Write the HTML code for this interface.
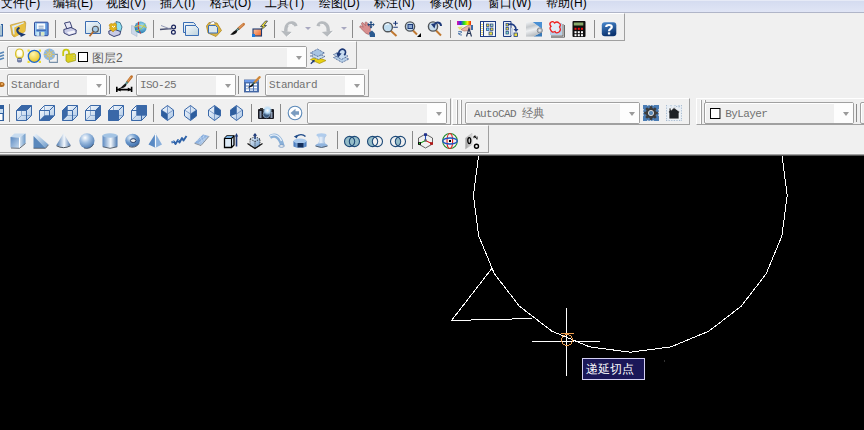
<!DOCTYPE html><html><head><meta charset="utf-8"><style>
*{box-sizing:border-box}
html,body{margin:0;padding:0}
body{width:864px;height:430px;overflow:hidden;background:#f0f0f0;position:relative;font-family:"Liberation Sans",sans-serif}
.a{position:absolute;overflow:visible}
.menu{position:absolute;left:0;top:0;width:864px;height:13px;background:linear-gradient(#e6eaf6 0px,#e6eaf6 1px,#d5dcf0 1.5px,#e0e5f5 12px);border-bottom:1px solid #b0b5c8}
.mi{position:absolute;top:-4px;font-size:12px;line-height:14px;color:#000;white-space:nowrap;font-weight:500}
.tb{position:absolute;border-top:1px solid #fff;border-left:1px solid #fff;border-right:1px solid #a0a0a0;border-bottom:1px solid #a0a0a0}
.sep{position:absolute;width:1px;background:#8a8a8a}
.cb{position:absolute;border:1px solid #a0a0a0;border-radius:2px;background:#f0f0f0;box-shadow:inset 1px 1px 0 #fff}
.cb .dd{position:absolute;right:0;top:0;bottom:0;background:#fdfdfd}
.cb .arr{position:absolute;right:4px;top:50%;margin-top:-1px;width:0;height:0;border-left:3.5px solid transparent;border-right:3.5px solid transparent;border-top:4px solid #9a9a9a}
.cb .t{position:absolute;top:0;bottom:0;display:flex;align-items:center;white-space:nowrap;color:#606060}
.sq{display:inline-block;width:11px;height:11px;border:1px solid #000;background:#fff;margin-right:5px}
.mono{color:#707070 !important;font-family:"Liberation Mono",monospace;font-size:11.6px;letter-spacing:-0.65px;transform:scaleX(0.95);transform-origin:0 50%}
.sans{font-family:"Liberation Sans",sans-serif;font-size:12px}
.grip{position:absolute;width:8px;border-left:1px solid #fff}
.grip:before,.grip:after{content:"";position:absolute;top:0;bottom:0;width:1px;background:#a0a0a0;box-shadow:-1px 0 0 #fff}
.grip:before{left:4px}.grip:after{left:8px}
</style></head><body><div class="menu">
<span class="mi" style="left:1px">文件(F)</span>
<span class="mi" style="left:53px">编辑(E)</span>
<span class="mi" style="left:106px">视图(V)</span>
<span class="mi" style="left:160px">插入(I)</span>
<span class="mi" style="left:210px">格式(O)</span>
<span class="mi" style="left:265px">工具(T)</span>
<span class="mi" style="left:319px">绘图(D)</span>
<span class="mi" style="left:374px">标注(N)</span>
<span class="mi" style="left:430px">修改(M)</span>
<span class="mi" style="left:488px">窗口(W)</span>
<span class="mi" style="left:546px">帮助(H)</span>
</div>
<div class="tb" style="left:-5px;top:13px;width:630px;height:28px"></div>
<div class="tb" style="left:-5px;top:41px;width:362px;height:28px"></div>
<div class="tb" style="left:-5px;top:69px;width:374px;height:28px"></div>
<div class="tb" style="left:-5px;top:98px;width:456px;height:27px"></div>
<div class="tb" style="left:452px;top:98px;width:238px;height:27px"></div>
<div class="tb" style="left:696px;top:98px;width:200px;height:27px"></div>
<div class="tb" style="left:-5px;top:125px;width:494px;height:28px"></div>
<div class="a" style="left:0;top:153px;width:864px;height:1px;background:#f4f4f4"></div>
<div class="a" style="left:0;top:154px;width:864px;height:1px;background:#a0a0a0"></div>
<div class="a" style="left:0;top:155px;width:864px;height:1px;background:#505050"></div>
<div class="sep" style="left:55px;top:20px;height:18px"></div>
<div class="sep" style="left:153px;top:20px;height:18px"></div>
<div class="sep" style="left:274px;top:20px;height:18px"></div>
<div class="sep" style="left:352px;top:20px;height:18px"></div>
<div class="sep" style="left:450px;top:20px;height:18px"></div>
<div class="sep" style="left:594px;top:20px;height:18px"></div>
<div class="a" style="left:305px;top:27px;width:0;height:0;border-left:3px solid transparent;border-right:3px solid transparent;border-top:3px solid #a8a8c0"></div>
<div class="a" style="left:341px;top:27px;width:0;height:0;border-left:3px solid transparent;border-right:3px solid transparent;border-top:3px solid #a8a8c0"></div>
<div class="cb" style="left:7px;top:46px;width:300px;height:22px"><div class="dd" style="width:19px"></div><div class="arr"></div><div class="t mono" style="left:4px;margin-top:-1px"></div></div>
<div class="a" style="left:78px;top:52px;width:10px;height:10px;border:1px solid #000;background:#fff"></div>
<span class="a" style="left:92px;top:47px;height:22px;display:flex;align-items:center;font-size:12px;color:#606060">图层2</span>
<div class="cb" style="left:7px;top:74px;width:100px;height:22px"><div class="dd" style="width:19px"></div><div class="arr"></div><div class="t mono" style="left:3px;margin-top:-1px">Standard</div></div>
<div class="sep" style="left:109px;top:76px;height:18px"></div>
<div class="cb" style="left:136px;top:74px;width:100px;height:22px"><div class="dd" style="width:19px"></div><div class="arr"></div><div class="t mono" style="left:3px;margin-top:-1px">ISO-25</div></div>
<div class="sep" style="left:238px;top:76px;height:18px"></div>
<div class="cb" style="left:265px;top:74px;width:100px;height:22px"><div class="dd" style="width:19px"></div><div class="arr"></div><div class="t mono" style="left:3px;margin-top:-1px">Standard</div></div>
<div class="sep" style="left:9px;top:104px;height:18px"></div>
<div class="sep" style="left:153px;top:104px;height:18px"></div>
<div class="sep" style="left:251px;top:104px;height:18px"></div>
<div class="sep" style="left:280px;top:104px;height:18px"></div>
<div class="cb" style="left:307px;top:102px;width:140px;height:22px"><div class="dd" style="width:19px"></div><div class="arr"></div><div class="t mono" style="left:4px;margin-top:-1px"></div></div>
<div class="grip" style="left:452px;top:100px;height:24px"></div>
<div class="cb" style="left:465px;top:102px;width:175px;height:22px"><div class="dd" style="width:19px"></div><div class="arr"></div><div class="t mono" style="left:8px;margin-top:0px">AutoCAD 经典</div></div>
<div class="grip" style="left:696px;top:100px;height:24px"></div>
<div class="cb" style="left:704px;top:102px;width:150px;height:22px"><div class="dd" style="width:19px"></div><div class="arr"></div><div class="t mono" style="left:5px;margin-top:0px"><i class="sq"></i>ByLayer</div></div>
<div class="sep" style="left:856px;top:104px;height:18px"></div>
<div class="cb" style="left:860px;top:102px;width:40px;height:22px"><div class="dd" style="width:19px"></div><div class="arr"></div><div class="t mono" style="left:4px;margin-top:-1px"></div></div>
<div class="sep" style="left:216px;top:131px;height:18px"></div>
<div class="sep" style="left:337px;top:131px;height:18px"></div>
<div class="sep" style="left:412px;top:131px;height:18px"></div>
<svg class="a" style="left:-13px;top:21px" width="16" height="16" viewBox="0 0 16 16"><rect x="-2" y="3.5" width="17.5" height="11.5" fill="#a9c3d3" stroke="#2f5f9f"/><rect x="-2" y="3" width="16" height="2" fill="#cfe0ea"/></svg>
<svg class="a" style="left:10px;top:21px" width="16" height="16" viewBox="0 0 16 16"><defs><linearGradient id="gOpen2" x1="0" y1="0" x2="1" y2="1"><stop offset="0" stop-color="#f2d060"/><stop offset="1" stop-color="#c89a20"/></linearGradient></defs><polygon points="0.3,4 15,0.3 15.8,2 15,10.5 4,16 2,14" fill="url(#gOpen2)" stroke="#b89030" stroke-width="0.6"/><polygon points="2,5 13.5,1.2 14.4,2.2 4.5,6.4 4.8,13.5 3.4,13.5" fill="#dceaf6"/><polygon points="4.5,6.4 14.4,2.2 15.3,3 15,10.6 5,16 4.8,13.5" fill="#e8c040"/><path d="M9.5,6.6 C6.5,8 6,11 11,13.6" fill="none" stroke="#1d3a72" stroke-width="2"/><polygon points="9.6,11.2 15.8,13.4 10.8,16" fill="#1d3a72"/></svg>
<svg class="a" style="left:34px;top:21px" width="16" height="16" viewBox="0 0 16 16"><rect x="0.5" y="1.2" width="13.6" height="13.5" rx="0.8" fill="#5f98dc" stroke="#2f4c9c" stroke-width="1"/><rect x="1.2" y="2" width="1.2" height="12" fill="#a8d8f8"/><rect x="2.8" y="2.4" width="8.4" height="6" fill="#f8fbff"/><line x1="4.6" y1="5.2" x2="9.6" y2="5.2" stroke="#7a98b8" stroke-width="0.9"/><line x1="4.6" y1="7.1" x2="9.6" y2="7.1" stroke="#7a98b8" stroke-width="0.9"/><rect x="2.4" y="8.6" width="9.5" height="1.2" fill="#3a62b0"/><rect x="2.4" y="10.8" width="8" height="3.9" fill="#e8f4f0"/><rect x="3.2" y="11" width="1.4" height="3.7" fill="#b8e4f8"/><rect x="5.4" y="10.8" width="1.2" height="3.9" fill="#2a4c98"/><rect x="7.2" y="11" width="3" height="3.5" fill="#d8e8c0"/></svg>
<svg class="a" style="left:63px;top:21px" width="16" height="16" viewBox="0 0 16 16"><polygon points="1.5,2 7,0.8 9,6.5 4,8" fill="#e8e8f6" stroke="#2a3266" stroke-width="0.9"/><polygon points="0.8,8.5 8,6.5 13.2,9 13,12.5 6,14.5 1,12" fill="#c8cbe6" stroke="#2a3266" stroke-width="0.9"/><polygon points="4,11 11,9.5 12.5,11.5 6,13.5" fill="#f4f4fb"/></svg>
<svg class="a" style="left:85px;top:21px" width="16" height="16" viewBox="0 0 16 16"><defs><linearGradient id="gPrev" x1="0" y1="0" x2="1" y2="1"><stop offset="0" stop-color="#f4f8fc"/><stop offset="1" stop-color="#b9d3e0"/></linearGradient></defs><polygon points="0.5,0.5 12.5,0.5 15.5,3.5 15.5,12.5 0.5,12.5" fill="url(#gPrev)" stroke="#3b6db1"/><circle cx="10.4" cy="8.3" r="3" fill="#a8cce8" stroke="#555" stroke-width="1.1"/><line x1="8.2" y1="10.8" x2="4.5" y2="15.3" stroke="#b46a2a" stroke-width="1.8"/></svg>
<svg class="a" style="left:108px;top:21px" width="16" height="16" viewBox="0 0 16 16"><polygon points="8,0.5 12,1.5 14,6 12.5,11 8,10" fill="#8fe0f0" stroke="#2a5a7a" stroke-width="0.8"/><polygon points="0.8,10 7,8.5 12.5,10.5 12,13.5 6,15.5 1,13" fill="#c8cbe6" stroke="#2a3266" stroke-width="0.9"/><path d="M1,4 L3,2.5 L5,3 L7,1.8 L8.5,3.5 L8,6 L9,8 L6.5,9.5 L5,11 L3,9 L1.5,8 L2,6 Z" fill="#e2b41c" stroke="#b88a10" stroke-width="0.6"/><path d="M4,5 Q5.5,7.5 7,5" fill="none" stroke="#fff" stroke-width="1"/></svg>
<svg class="a" style="left:131px;top:21px" width="16" height="16" viewBox="0 0 16 16"><defs><radialGradient id="gGlb" cx="0.6" cy="0.35" r="0.7"><stop offset="0" stop-color="#a8e4f8"/><stop offset="1" stop-color="#1870a8"/></radialGradient></defs><polygon points="0.5,4.5 6,6 6,15.5 0.5,12.5" fill="#cbd8ea" stroke="#a8b8cc" stroke-width="0.6"/><circle cx="9.6" cy="6.6" r="6" fill="url(#gGlb)"/><path d="M7.5,0.8 Q6,7 9.5,12.5" fill="none" stroke="#d03030" stroke-width="1"/><path d="M3.8,6 Q9,3 15.5,6.5" fill="none" stroke="#e8c840" stroke-width="1"/><path d="M4.5,10 Q11,9 14,3" fill="none" stroke="#b0d040" stroke-width="0.9"/></svg>
<svg class="a" style="left:160px;top:21px" width="16" height="16" viewBox="0 0 16 16"><line x1="0" y1="8.5" x2="11.5" y2="7.5" stroke="#4a5070" stroke-width="1.3"/><line x1="1" y1="4.5" x2="11.5" y2="8.5" stroke="#8890b0" stroke-width="0.9"/><circle cx="13.6" cy="6" r="1.9" fill="none" stroke="#16205a" stroke-width="1.2"/><circle cx="13.4" cy="11.2" r="1.9" fill="none" stroke="#16205a" stroke-width="1.2"/></svg>
<svg class="a" style="left:183px;top:21px" width="16" height="16" viewBox="0 0 16 16"><defs><linearGradient id="gCpy" x1="0" y1="0" x2="1" y2="1"><stop offset="0" stop-color="#f8fafc"/><stop offset="1" stop-color="#bcd2dc"/></linearGradient></defs><polygon points="0.5,1.5 10.5,1.5 12.5,3.5 12.5,11.5 0.5,11.5" fill="url(#gCpy)" stroke="#3a6eb5"/><polygon points="2.5,4.5 12.5,4.5 15.5,7.5 15.5,14.5 2.5,14.5" fill="url(#gCpy)" stroke="#3a6eb5"/></svg>
<svg class="a" style="left:206px;top:21px" width="16" height="16" viewBox="0 0 16 16"><polygon points="0.5,5 3,1.5 11,2 15.5,9.5 10,15.5 2,12" fill="#dcb444" stroke="#b08820" stroke-width="0.8"/><path d="M3.5,3.5 Q5,0 7.5,0.5 Q9,1 9,3" fill="#fff" stroke="#777" stroke-width="0.7"/><polygon points="2.5,4.5 9.5,4.5 11.5,6.5 11.5,12 2.5,12" fill="#dce8ee" stroke="#3a6eb5"/></svg>
<svg class="a" style="left:229px;top:21px" width="16" height="16" viewBox="0 0 16 16"><line x1="14.6" y1="3.2" x2="9.6" y2="7.6" stroke="#c8783a" stroke-width="2.8" stroke-linecap="round"/><line x1="14.2" y1="3.4" x2="10" y2="7.2" stroke="#eab080" stroke-width="0.8"/><line x1="9.8" y1="7.4" x2="6.8" y2="10" stroke="#2e5a58" stroke-width="2"/><line x1="9.6" y1="7.6" x2="7.4" y2="9.6" stroke="#d8e8e8" stroke-width="0.6"/><path d="M7.4,9 C5,9.6 3.6,11.6 1.2,13.8 C4.6,14 7.4,12.6 8.2,10.4 Z" fill="#111"/></svg>
<svg class="a" style="left:252px;top:21px" width="16" height="16" viewBox="0 0 16 16"><defs><linearGradient id="gBlk" x1="0" y1="0" x2="1" y2="1"><stop offset="0" stop-color="#f8c8a8"/><stop offset="1" stop-color="#f06020"/></linearGradient></defs><polygon points="13.5,0 8.5,5.5 11,5.5 6.5,11 14.5,4.5 12,4.5 15.5,0" fill="#f2e030" stroke="#1e2a50" stroke-width="0.7"/><rect x="1" y="8" width="8.5" height="7" fill="url(#gBlk)" stroke="#1e3a70" stroke-width="1.1"/><rect x="0" y="13" width="3" height="3" fill="#1a7ae0"/></svg>
<svg class="a" style="left:281px;top:21px" width="16" height="16" viewBox="0 0 16 16"><path d="M15,5.2 C14.2,1.4 9.2,0.8 6.6,3.6 C5,5.4 4.4,8 4.9,10.8" fill="none" stroke="#b6babe" stroke-width="3.2"/><polygon points="0,9.8 11.2,11 5.6,15.8" fill="#b6babe"/><path d="M6,15.6 L11,11.4 M7.2,4.6 C8,3.6 9.5,3.2 11,3.5" fill="none" stroke="#fff" stroke-width="0.8"/></svg>
<svg class="a" style="left:317px;top:21px" width="16" height="16" viewBox="0 0 16 16"><path d="M1,5.2 C1.8,1.4 6.8,0.8 9.4,3.6 C11,5.4 11.6,8 11.1,10.8" fill="none" stroke="#b6babe" stroke-width="3.2"/><polygon points="16,9.8 4.8,11 10.4,15.8" fill="#b6babe"/><path d="M10.8,15.6 L16,10.4 M2.8,3.6 C4.2,3 6,3.4 7,4.2" fill="none" stroke="#fff" stroke-width="0.8"/></svg>
<svg class="a" style="left:359px;top:21px" width="16" height="16" viewBox="0 0 16 16"><path d="M1.5,7 C0.2,6 0.8,4.2 2.4,5 L4.2,6.2 L2.6,3 C2.2,1.8 3.4,1 4.4,2 L6.6,4.6 L6,1.8 C6.2,0.6 7.6,0.6 8.2,1.8 L9.6,5.4 L10.2,4 C11,3.4 12,4 11.6,5.2 L11.2,9.2 L12.2,11.2 L9.6,13.4 L7,12.4 Z" fill="#d88e8e" stroke="#9a5858" stroke-width="0.6"/><polygon points="10,11.8 13,9.6 16,12.6 16,16 11,16" fill="#2a5a90"/><path d="M12,1 L12,6.4 M9.2,3.6 L14.8,3.6" stroke="#1e4a80" stroke-width="1.2"/><polygon points="12,0 10.3,1.8 13.7,1.8" fill="#1e4a80"/><polygon points="12,7.4 10.3,5.6 13.7,5.6" fill="#1e4a80"/><polygon points="8.3,3.6 10,1.9 10,5.3" fill="#1e4a80"/><polygon points="15.7,3.6 14,1.9 14,5.3" fill="#1e4a80"/></svg>
<svg class="a" style="left:382px;top:21px" width="16" height="16" viewBox="0 0 16 16"><line x1="8.5" y1="9.5" x2="14.5" y2="15" stroke="#c07830" stroke-width="2"/><circle cx="5.8" cy="6.2" r="4.6" fill="#c0ddf0" stroke="#505458" stroke-width="1.4"/><path d="M3.5,4 Q5,2.5 7,3" fill="none" stroke="#fff" stroke-width="1"/><path d="M13.5,0 L13.5,4.5 M11.2,2.2 L15.8,2.2 M11.2,6.2 L15.8,6.2" stroke="#1e3a78" stroke-width="1.1"/></svg>
<svg class="a" style="left:405px;top:21px" width="16" height="16" viewBox="0 0 16 16"><line x1="8" y1="9.5" x2="12" y2="13.5" stroke="#c07830" stroke-width="2"/><circle cx="5" cy="5.5" r="4.6" fill="#c8dcec" stroke="#505458" stroke-width="1.4"/><rect x="3" y="3.5" width="4.5" height="4" fill="#8aa8d0" stroke="#1e3a78" stroke-width="1"/><polygon points="16,12 16,16 12,16" fill="#000"/></svg>
<svg class="a" style="left:428px;top:21px" width="16" height="16" viewBox="0 0 16 16"><line x1="8" y1="9.5" x2="13" y2="14.5" stroke="#c07830" stroke-width="2"/><circle cx="5" cy="5.5" r="4.6" fill="#c8dcec" stroke="#505458" stroke-width="1.4"/><path d="M13,5 C13,1.5 9,0.5 7,3" fill="none" stroke="#1e3a78" stroke-width="2"/><polygon points="3,3 8,2 6.5,7.5" fill="#1e3a78"/></svg>
<svg class="a" style="left:457px;top:21px" width="16" height="16" viewBox="0 0 16 16"><defs><linearGradient id="gRb" x1="0" y1="0" x2="1" y2="0"><stop offset="0" stop-color="#f010a0"/><stop offset="0.25" stop-color="#3030f0"/><stop offset="0.5" stop-color="#20e020"/><stop offset="0.75" stop-color="#f0f000"/><stop offset="1" stop-color="#f02000"/></linearGradient></defs><rect x="0" y="0" width="14" height="4" fill="url(#gRb)"/><path d="M0.5,6 L6,5.5 L3,9 Z" fill="#e8e070"/><path d="M1,11 Q3,9.5 5,11 Q3,13 1,12.5 Q3,14.5 5,14" fill="none" stroke="#5a80b0" stroke-width="1"/><path d="M4,8.5 L11,4.5 L14,4 L15,7 L12,9.5 L7,10 Z" fill="#e8b4a8" stroke="#a86a5a" stroke-width="0.6"/><rect x="14" y="4" width="2" height="5" fill="#3a6aa8"/><path d="M9.5,15.5 L12,7.5 L14.5,15.5 M10.5,12.5 L13.5,12.5" fill="none" stroke="#28385a" stroke-width="1.2"/></svg>
<svg class="a" style="left:480px;top:21px" width="16" height="16" viewBox="0 0 16 16"><rect x="0.5" y="0.5" width="15" height="15" fill="#f0f4f8" stroke="#1e3c84"/><rect x="1" y="1" width="2" height="14" fill="#fff"/><line x1="3.5" y1="1" x2="3.5" y2="15" stroke="#1e3c84"/><path d="M2,3 L2,14" stroke="#e0c020" stroke-width="1.2" stroke-dasharray="1,1"/><rect x="6.5" y="3" width="2.5" height="2.5" fill="#e8d840" stroke="#1e3c84" stroke-width="0.7"/><rect x="10.5" y="3" width="2.5" height="2.5" fill="#a8d8b8" stroke="#1e3c84" stroke-width="0.7"/><rect x="6.5" y="7" width="2.5" height="2.5" fill="#70e0f0" stroke="#1e3c84" stroke-width="0.7"/><rect x="10.5" y="7" width="2.5" height="2.5" fill="#e8d840" stroke="#1e3c84" stroke-width="0.7"/><rect x="9" y="11" width="3.5" height="3" fill="#f0e040" stroke="#1e3c84" stroke-width="0.7"/></svg>
<svg class="a" style="left:503px;top:21px" width="16" height="16" viewBox="0 0 16 16"><polygon points="0.5,0.5 8,0.5 8,15.5 0.5,15.5" fill="#e8eef4" stroke="#1e3c84"/><rect x="3" y="2.5" width="2.5" height="2.5" fill="#d8d040" stroke="#1e3c84" stroke-width="0.7"/><rect x="3" y="6.5" width="2.5" height="2.5" fill="#e8d840" stroke="#1e3c84" stroke-width="0.7"/><rect x="3" y="10.5" width="2.5" height="2.5" fill="#80e0c0" stroke="#1e3c84" stroke-width="0.7"/><path d="M5,3.5 C10,2 13,5 13,9" fill="none" stroke="#1e3c84" stroke-width="1.6"/><polygon points="10.5,8 15.5,8 13,11" fill="#1e3c84"/><rect x="11" y="12" width="3.5" height="3.5" fill="#f0e040" stroke="#1e3c84" stroke-width="0.8"/><rect x="8" y="7" width="2" height="7" fill="#c8d4e4"/></svg>
<svg class="a" style="left:526px;top:21px" width="16" height="16" viewBox="0 0 16 16"><defs><linearGradient id="gSsm2" x1="0" y1="0" x2="0.3" y2="1"><stop offset="0" stop-color="#f4f6f8"/><stop offset="0.35" stop-color="#c4c8cc"/><stop offset="0.6" stop-color="#eef0f2"/><stop offset="1" stop-color="#b8bcc0"/></linearGradient></defs><rect x="0" y="1" width="16" height="14.5" fill="#e4e6e8"/><polygon points="6.5,1 16,1 16,8" fill="#4a90d4"/><polygon points="7.5,15.5 16,11 16,15.5" fill="#3a7ab8"/><polygon points="0,1 6.5,1 16,8 16,11 7.5,15.5 0,15.5" fill="url(#gSsm2)"/><circle cx="13.8" cy="9.4" r="2.6" fill="#b8bcc2" stroke="#7a8088" stroke-width="0.8"/><circle cx="13.8" cy="9.4" r="1.1" fill="#e8eaec"/></svg>
<svg class="a" style="left:549px;top:21px" width="16" height="16" viewBox="0 0 16 16"><path d="M14,3 L14,15 L2,15 M15.5,4 L15.5,16.2 L2,16.2" fill="none" stroke="#5a5a5a" stroke-width="0.9"/><rect x="1" y="2" width="12" height="12" fill="#b8d0e8"/><path d="M1.5,1.5 Q4,-0.5 5.5,2 Q8,0 10,2 Q12.5,3.5 10.5,6 Q12.5,9 10,11 Q7,13 6,10.5 Q3,12 2,9.5 Q0,7 2,5.5 Q0,3 1.5,1.5 Z" fill="#e0ecf6" stroke="#ee2020" stroke-width="1.3"/></svg>
<svg class="a" style="left:572px;top:21px" width="16" height="16" viewBox="0 0 16 16"><rect x="0.5" y="0" width="13" height="16" rx="1" fill="#0e0e0e"/><rect x="1.8" y="1.5" width="9.5" height="3" fill="#86a868"/><g fill="#ee1010"><rect x="2.5" y="6.8" width="2" height="2"/><rect x="5.8" y="6.8" width="2" height="2"/><rect x="9" y="6.8" width="2" height="2"/></g><g fill="#fff"><rect x="2.5" y="10.2" width="2" height="2"/><rect x="5.8" y="10.2" width="2" height="2"/><rect x="9" y="10.2" width="2" height="2"/><rect x="2.5" y="13.2" width="2" height="2"/><rect x="5.8" y="13.2" width="2" height="2"/><rect x="9" y="13.2" width="2" height="2"/></g></svg>
<svg class="a" style="left:601px;top:21px" width="16" height="16" viewBox="0 0 16 16"><defs><linearGradient id="gHlp" x1="0" y1="0" x2="0.3" y2="1"><stop offset="0" stop-color="#4a8ad0"/><stop offset="1" stop-color="#0c3470"/></linearGradient></defs><rect x="0.8" y="1.2" width="14.5" height="14" rx="3" fill="url(#gHlp)"/><path d="M5.2,6 C5.2,3.3 10.8,3.3 10.8,6 C10.8,8 8,8 8,10.2" fill="none" stroke="#fff" stroke-width="2.2"/><rect x="6.9" y="11.3" width="2.3" height="2.2" fill="#fff"/></svg>
<svg class="a" style="left:-12px;top:48px" width="16" height="16" viewBox="0 0 16 16"><path d="M10,6 L16,4 M10,9 L16,7 M10,12 L16,10" stroke="#5a88b8" stroke-width="1.6"/></svg>
<svg class="a" style="left:14px;top:48px" width="16" height="16" viewBox="0 0 16 16"><defs><radialGradient id="gBulb2" cx="0.5" cy="0.4" r="0.6"><stop offset="0" stop-color="#fff"/><stop offset="0.55" stop-color="#fffde8"/><stop offset="1" stop-color="#f0e070"/></radialGradient></defs><path d="M3.5,10 C0.5,7.5 1,1 5.5,1 C10,1 10.5,7.5 7.5,10 Z" fill="url(#gBulb2)" stroke="#d8c028" stroke-width="1.2"/><rect x="3.6" y="10.2" width="3.8" height="3.8" rx="0.8" fill="#5a6a98" stroke="#34447a" stroke-width="0.6"/><line x1="3.8" y1="11.6" x2="7.2" y2="11.6" stroke="#e8eef8" stroke-width="0.7"/><line x1="3.8" y1="13" x2="7.2" y2="13" stroke="#c8d0e8" stroke-width="0.5"/></svg>
<svg class="a" style="left:27px;top:48px" width="16" height="16" viewBox="0 0 16 16"><defs><radialGradient id="gSun2" cx="0.4" cy="0.3" r="0.75"><stop offset="0" stop-color="#fff7b0"/><stop offset="1" stop-color="#eac010"/></radialGradient></defs><rect x="0.5" y="1.5" width="2.2" height="2.2" fill="#f2e030"/><rect x="11.8" y="1.5" width="2.2" height="2.2" fill="#f2e030"/><rect x="0.5" y="12.8" width="2.2" height="2.2" fill="#f2e030"/><rect x="11.8" y="12.8" width="2.2" height="2.2" fill="#f2e030"/><circle cx="7.3" cy="8.3" r="6" fill="url(#gSun2)" stroke="#2068c8" stroke-width="1.3"/></svg>
<svg class="a" style="left:43px;top:48px" width="16" height="16" viewBox="0 0 16 16"><path d="M6.4,14.4 L6.4,11.5 M6.4,14.4 L14.4,14.4 L14.4,6.4 L11.5,6.4" fill="none" stroke="#7890a8" stroke-width="1.1"/><circle cx="6.4" cy="6.4" r="5.8" fill="#90b8e2"/><circle cx="6.4" cy="6.4" r="2.6" fill="#b8c8d0" stroke="#d8c060" stroke-width="1"/><circle cx="6.4" cy="6.4" r="1.1" fill="#d8c060"/><g stroke="#d8c060" stroke-width="1"><line x1="6.4" y1="1.2" x2="6.4" y2="3.4"/><line x1="6.4" y1="9.4" x2="6.4" y2="11.6"/><line x1="1.2" y1="6.4" x2="3.4" y2="6.4"/><line x1="9.4" y1="6.4" x2="11.6" y2="6.4"/><line x1="2.8" y1="2.8" x2="4.3" y2="4.3"/><line x1="8.5" y1="8.5" x2="10" y2="10"/><line x1="10" y1="2.8" x2="8.5" y2="4.3"/><line x1="2.8" y1="10" x2="4.3" y2="8.5"/></g></svg>
<svg class="a" style="left:61px;top:48px" width="16" height="16" viewBox="0 0 16 16"><path d="M2.2,8 L2.2,4.5 C2.2,1 7.5,0.5 8,4 L8,6" fill="none" stroke="#c8c810" stroke-width="1.8"/><path d="M5,6.5 L13.5,5.5 L14.5,6.5 L14.5,12.5 L7,14.5 L5,13 Z" fill="#dcd020" stroke="#9a9a10" stroke-width="0.7"/><g fill="#a8c8e0"><rect x="12.5" y="7" width="1" height="1"/><rect x="12.5" y="9" width="1" height="1"/><rect x="12.5" y="11" width="1" height="1"/></g></svg>
<svg class="a" style="left:310px;top:48px" width="16" height="16" viewBox="0 0 16 16"><polygon points="0.5,11.5 6.5,9 16,12.5 9.5,15.5" fill="#e8d010" stroke="#a89008" stroke-width="0.7"/><polygon points="0.5,8 7,5.5 15,8.5 8.5,11.5" fill="#c8dcec" stroke="#2e4a80" stroke-width="0.8" stroke-dasharray="1.1,0.7"/><polygon points="0.5,5 7.5,1 14.5,5 8,8.5" fill="#a8c4e2" stroke="#2e4a80" stroke-width="0.8" stroke-dasharray="1.1,0.7"/><path d="M0.8,15.8 L3.6,13" stroke="#1e3a78" stroke-width="1.3"/><polygon points="4.8,11.8 1.8,12.4 4.2,14.8" fill="#1e3a78"/></svg>
<svg class="a" style="left:333px;top:48px" width="16" height="16" viewBox="0 0 16 16"><polygon points="0.5,9.5 7,7 16,11 9,14.5" fill="#b8d0e8" stroke="#2e4a80" stroke-width="0.8" stroke-dasharray="1.1,0.7"/><polygon points="0.5,6.5 7,4 15,8 8.5,11.5" fill="#c8dcf0" stroke="#2e4a80" stroke-width="0.8" stroke-dasharray="1.1,0.7"/><circle cx="9.2" cy="4.8" r="3.2" fill="#c8dcf0"/><path d="M6,6.5 C5,2 9,0 11.5,1.8 C13.2,3.2 12.8,6 11,7" fill="none" stroke="#1e3a78" stroke-width="1.6"/><polygon points="3.2,4.6 8.6,5.4 5,9.8" fill="#1e3a78"/></svg>
<svg class="a" style="left:-12px;top:76px" width="16" height="16" viewBox="0 0 16 16"><ellipse cx="13.5" cy="8.5" rx="3" ry="2.5" fill="#b06a20"/><ellipse cx="14" cy="8" rx="1.2" ry="1" fill="#f0b060"/></svg>
<svg class="a" style="left:116px;top:76px" width="16" height="16" viewBox="0 0 16 16"><path d="M0.8,10.8 L0.8,16 M15.6,10.8 L15.6,16 M0.8,13.6 L15.6,13.6" stroke="#000" stroke-width="1.6"/><polygon points="1.2,13.6 4.6,11.6 4.6,15.6" fill="#000"/><polygon points="15.2,13.6 11.8,11.6 11.8,15.6" fill="#000"/><line x1="15.6" y1="0.6" x2="11.4" y2="6" stroke="#c0702a" stroke-width="2.6" stroke-linecap="round"/><line x1="15" y1="1" x2="11.6" y2="5.6" stroke="#f0b070" stroke-width="0.7"/><line x1="11.6" y1="5.8" x2="9" y2="8.8" stroke="#2a6a68" stroke-width="1.8"/><line x1="11.2" y1="6.2" x2="9.4" y2="8.4" stroke="#e0f0f0" stroke-width="0.5"/><path d="M9.6,7.8 C7.2,8.6 6,10.6 4,12.6 C7.2,12.6 9.6,11.2 10.4,9 Z" fill="#151515"/></svg>
<svg class="a" style="left:244px;top:76px" width="16" height="16" viewBox="0 0 16 16"><rect x="0.5" y="4" width="14" height="12" fill="#4a70b0" stroke="#3a5a98" stroke-width="0.8"/><rect x="0.5" y="4" width="14" height="2" fill="#6a98e8"/><g fill="#fff"><rect x="2" y="7.5" width="3" height="2"/><rect x="6" y="7.5" width="3" height="2"/><rect x="10" y="7.5" width="3" height="2"/><rect x="2" y="10.5" width="3" height="2"/><rect x="6" y="10.5" width="3" height="2"/><rect x="10" y="10.5" width="3" height="2"/><rect x="2" y="13.2" width="3" height="1.8"/><rect x="6" y="13.2" width="3" height="1.8" fill="#c8d8f0"/><rect x="10" y="13.2" width="3" height="1.8" fill="#c8d8f0"/></g><line x1="15.5" y1="1.2" x2="10.5" y2="6.5" stroke="#d0883a" stroke-width="2.4" stroke-linecap="round"/><line x1="10.5" y1="6.5" x2="8" y2="9" stroke="#2a5a58" stroke-width="1.6"/><path d="M8.5,8 C6.5,9.5 5.5,10.5 3.5,11.5 C6.5,11.8 8.5,10.5 9.5,9 Z" fill="#111"/></svg>
<svg class="a" style="left:-12px;top:105px" width="16" height="16" viewBox="0 0 16 16"><rect x="10" y="0" width="6" height="16" fill="#2e5e9e"/><rect x="10" y="4" width="5" height="4" fill="#c8dcf0"/><rect x="10" y="9" width="4.5" height="6" fill="#fff"/></svg>
<svg class="a" style="left:16px;top:105px" width="16" height="16" viewBox="0 0 16 16"><defs><linearGradient id="gCube_top" x1="0" y1="0" x2="1" y2="1"><stop offset="0" stop-color="#ffffff"/><stop offset="1" stop-color="#a8c4e4"/></linearGradient></defs><polygon points="0.5,5.5 5.5,0.5 15.5,0.5 15.5,10.5 10.5,15.5 0.5,15.5" fill="url(#gCube_top)"/><path d="M5.5,0.5 L5.5,10.5 L0.5,15.5 M5.5,10.5 L15.5,10.5" fill="none" stroke="#7a9cc8" stroke-width="0.8"/><polygon points="0.5,5.5 5.5,0.5 15.5,0.5 10.5,5.5" fill="#3a68a8"/><path d="M0.5,5.5 L5.5,0.5 L15.5,0.5 L15.5,10.5 L10.5,15.5 L0.5,15.5 Z M0.5,5.5 L10.5,5.5 L10.5,15.5 M10.5,5.5 L15.5,0.5" fill="none" stroke="#3a68a8" stroke-width="1"/></svg>
<svg class="a" style="left:39px;top:105px" width="16" height="16" viewBox="0 0 16 16"><defs><linearGradient id="gCube_bottom" x1="0" y1="0" x2="1" y2="1"><stop offset="0" stop-color="#ffffff"/><stop offset="1" stop-color="#a8c4e4"/></linearGradient></defs><polygon points="0.5,5.5 5.5,0.5 15.5,0.5 15.5,10.5 10.5,15.5 0.5,15.5" fill="url(#gCube_bottom)"/><path d="M5.5,0.5 L5.5,10.5 L0.5,15.5 M5.5,10.5 L15.5,10.5" fill="none" stroke="#7a9cc8" stroke-width="0.8"/><polygon points="0.5,15.5 5.5,10.5 15.5,10.5 10.5,15.5" fill="#3a68a8"/><path d="M0.5,5.5 L5.5,0.5 L15.5,0.5 L15.5,10.5 L10.5,15.5 L0.5,15.5 Z M0.5,5.5 L10.5,5.5 L10.5,15.5 M10.5,5.5 L15.5,0.5" fill="none" stroke="#3a68a8" stroke-width="1"/></svg>
<svg class="a" style="left:62px;top:105px" width="16" height="16" viewBox="0 0 16 16"><defs><linearGradient id="gCube_left" x1="0" y1="0" x2="1" y2="1"><stop offset="0" stop-color="#ffffff"/><stop offset="1" stop-color="#a8c4e4"/></linearGradient></defs><polygon points="0.5,5.5 5.5,0.5 15.5,0.5 15.5,10.5 10.5,15.5 0.5,15.5" fill="url(#gCube_left)"/><path d="M5.5,0.5 L5.5,10.5 L0.5,15.5 M5.5,10.5 L15.5,10.5" fill="none" stroke="#7a9cc8" stroke-width="0.8"/><polygon points="0.5,5.5 5.5,0.5 5.5,10.5 0.5,15.5" fill="#3a68a8"/><path d="M0.5,5.5 L5.5,0.5 L15.5,0.5 L15.5,10.5 L10.5,15.5 L0.5,15.5 Z M0.5,5.5 L10.5,5.5 L10.5,15.5 M10.5,5.5 L15.5,0.5" fill="none" stroke="#3a68a8" stroke-width="1"/></svg>
<svg class="a" style="left:85px;top:105px" width="16" height="16" viewBox="0 0 16 16"><defs><linearGradient id="gCube_right" x1="0" y1="0" x2="1" y2="1"><stop offset="0" stop-color="#ffffff"/><stop offset="1" stop-color="#a8c4e4"/></linearGradient></defs><polygon points="0.5,5.5 5.5,0.5 15.5,0.5 15.5,10.5 10.5,15.5 0.5,15.5" fill="url(#gCube_right)"/><path d="M5.5,0.5 L5.5,10.5 L0.5,15.5 M5.5,10.5 L15.5,10.5" fill="none" stroke="#7a9cc8" stroke-width="0.8"/><polygon points="10.5,5.5 15.5,0.5 15.5,10.5 10.5,15.5" fill="#3a68a8"/><path d="M0.5,5.5 L5.5,0.5 L15.5,0.5 L15.5,10.5 L10.5,15.5 L0.5,15.5 Z M0.5,5.5 L10.5,5.5 L10.5,15.5 M10.5,5.5 L15.5,0.5" fill="none" stroke="#3a68a8" stroke-width="1"/></svg>
<svg class="a" style="left:108px;top:105px" width="16" height="16" viewBox="0 0 16 16"><defs><linearGradient id="gCube_front" x1="0" y1="0" x2="1" y2="1"><stop offset="0" stop-color="#ffffff"/><stop offset="1" stop-color="#a8c4e4"/></linearGradient></defs><polygon points="0.5,5.5 5.5,0.5 15.5,0.5 15.5,10.5 10.5,15.5 0.5,15.5" fill="url(#gCube_front)"/><path d="M5.5,0.5 L5.5,10.5 L0.5,15.5 M5.5,10.5 L15.5,10.5" fill="none" stroke="#7a9cc8" stroke-width="0.8"/><polygon points="0.5,5.5 10.5,5.5 10.5,15.5 0.5,15.5" fill="#3a68a8"/><path d="M0.5,5.5 L5.5,0.5 L15.5,0.5 L15.5,10.5 L10.5,15.5 L0.5,15.5 Z M0.5,5.5 L10.5,5.5 L10.5,15.5 M10.5,5.5 L15.5,0.5" fill="none" stroke="#3a68a8" stroke-width="1"/></svg>
<svg class="a" style="left:131px;top:105px" width="16" height="16" viewBox="0 0 16 16"><defs><linearGradient id="gCube_back" x1="0" y1="0" x2="1" y2="1"><stop offset="0" stop-color="#ffffff"/><stop offset="1" stop-color="#a8c4e4"/></linearGradient></defs><polygon points="0.5,5.5 5.5,0.5 15.5,0.5 15.5,10.5 10.5,15.5 0.5,15.5" fill="url(#gCube_back)"/><path d="M5.5,0.5 L5.5,10.5 L0.5,15.5 M5.5,10.5 L15.5,10.5" fill="none" stroke="#7a9cc8" stroke-width="0.8"/><polygon points="5.5,0.5 15.5,0.5 15.5,10.5 5.5,10.5" fill="#3a68a8"/><path d="M0.5,5.5 L5.5,0.5 L15.5,0.5 L15.5,10.5 L10.5,15.5 L0.5,15.5 Z M0.5,5.5 L10.5,5.5 L10.5,15.5 M10.5,5.5 L15.5,0.5" fill="none" stroke="#3a68a8" stroke-width="1"/></svg>
<svg class="a" style="left:160px;top:105px" width="16" height="16" viewBox="0 0 16 16"><defs><linearGradient id="gIso_ll" x1="0" y1="0" x2="1" y2="1"><stop offset="0" stop-color="#f8fbff"/><stop offset="1" stop-color="#a8c4e4"/></linearGradient></defs><polygon points="7.5,0.5 13.5,5 13.5,11 7.5,15.5 1.5,11 1.5,5" fill="url(#gIso_ll)"/><path d="M7.5,0.5 L7.5,9 M1.5,5 L7.5,9 L13.5,5 M7.5,9 L7.5,15.5" fill="none" stroke="#6a8cc0" stroke-width="0.8"/><polygon points="1.5,5 7.5,9 7.5,15.5 1.5,11" fill="#2e5e9e"/><polygon points="7.5,0.5 13.5,5 13.5,11 7.5,15.5 1.5,11 1.5,5" fill="none" stroke="#3a68a8" stroke-width="1"/></svg>
<svg class="a" style="left:183px;top:105px" width="16" height="16" viewBox="0 0 16 16"><defs><linearGradient id="gIso_lr" x1="0" y1="0" x2="1" y2="1"><stop offset="0" stop-color="#f8fbff"/><stop offset="1" stop-color="#a8c4e4"/></linearGradient></defs><polygon points="7.5,0.5 13.5,5 13.5,11 7.5,15.5 1.5,11 1.5,5" fill="url(#gIso_lr)"/><path d="M7.5,0.5 L7.5,9 M1.5,5 L7.5,9 L13.5,5 M7.5,9 L7.5,15.5" fill="none" stroke="#6a8cc0" stroke-width="0.8"/><polygon points="7.5,9 13.5,5 13.5,11 7.5,15.5" fill="#2e5e9e"/><polygon points="7.5,0.5 13.5,5 13.5,11 7.5,15.5 1.5,11 1.5,5" fill="none" stroke="#3a68a8" stroke-width="1"/></svg>
<svg class="a" style="left:207px;top:105px" width="16" height="16" viewBox="0 0 16 16"><defs><linearGradient id="gIso_ur" x1="0" y1="0" x2="1" y2="1"><stop offset="0" stop-color="#f8fbff"/><stop offset="1" stop-color="#a8c4e4"/></linearGradient></defs><polygon points="7.5,0.5 13.5,5 13.5,11 7.5,15.5 1.5,11 1.5,5" fill="url(#gIso_ur)"/><path d="M7.5,0.5 L7.5,9 M1.5,5 L7.5,9 L13.5,5 M7.5,9 L7.5,15.5" fill="none" stroke="#6a8cc0" stroke-width="0.8"/><polygon points="7.5,0.5 13.5,5 13.5,11 7.5,9" fill="#2e5e9e"/><polygon points="7.5,0.5 13.5,5 13.5,11 7.5,15.5 1.5,11 1.5,5" fill="none" stroke="#3a68a8" stroke-width="1"/></svg>
<svg class="a" style="left:229px;top:105px" width="16" height="16" viewBox="0 0 16 16"><defs><linearGradient id="gIso_ul" x1="0" y1="0" x2="1" y2="1"><stop offset="0" stop-color="#f8fbff"/><stop offset="1" stop-color="#a8c4e4"/></linearGradient></defs><polygon points="7.5,0.5 13.5,5 13.5,11 7.5,15.5 1.5,11 1.5,5" fill="url(#gIso_ul)"/><path d="M7.5,0.5 L7.5,9 M1.5,5 L7.5,9 L13.5,5 M7.5,9 L7.5,15.5" fill="none" stroke="#6a8cc0" stroke-width="0.8"/><polygon points="1.5,5 7.5,0.5 7.5,9 1.5,11" fill="#2e5e9e"/><polygon points="7.5,0.5 13.5,5 13.5,11 7.5,15.5 1.5,11 1.5,5" fill="none" stroke="#3a68a8" stroke-width="1"/></svg>
<svg class="a" style="left:258px;top:105px" width="16" height="16" viewBox="0 0 16 16"><defs><radialGradient id="gSpk" cx="0.5" cy="0.5" r="0.5"><stop offset="0" stop-color="#fff"/><stop offset="0.5" stop-color="#b8dcf8"/><stop offset="1" stop-color="#b8dcf8" stop-opacity="0"/></radialGradient></defs><rect x="0" y="4" width="16" height="10" rx="1" fill="#1a1a22"/><rect x="2" y="3" width="3" height="2" fill="#333"/><rect x="1.5" y="6" width="2" height="7" fill="#8898b0"/><circle cx="8.5" cy="9.5" r="3.3" fill="#3a5a80" stroke="#8aa4c4" stroke-width="0.8"/><rect x="12.5" y="7" width="2" height="6" fill="#8898b0"/><circle cx="9.5" cy="5.5" r="5" fill="url(#gSpk)"/></svg>
<svg class="a" style="left:287px;top:105px" width="16" height="16" viewBox="0 0 16 16"><circle cx="8" cy="8" r="6.8" fill="#fff" stroke="#5a88b8" stroke-width="1.1"/><polygon points="3.5,8 8.5,3.8 8.5,6.2 12,6.2 12,9.8 8.5,9.8 8.5,12.2" fill="#7a9cc0"/></svg>
<svg class="a" style="left:643px;top:105px" width="16" height="16" viewBox="0 0 16 16"><rect x="0" y="0" width="16" height="16" fill="#4a7cb4"/><path d="M0.5,4 V12 M15.5,4 V12 M4,0.5 H12 M4,15.5 H12" stroke="#c8d4e0" stroke-width="0.9" stroke-dasharray="1.5,1.2"/><g fill="#3c3c3c"><circle cx="8" cy="8" r="5.2"/><rect x="6.7" y="1.2" width="2.6" height="13.6"/><rect x="1.2" y="6.7" width="13.6" height="2.6"/><rect x="6.7" y="1.2" width="2.6" height="13.6" transform="rotate(45 8 8)"/><rect x="6.7" y="1.2" width="2.6" height="13.6" transform="rotate(-45 8 8)"/></g><circle cx="8" cy="8" r="2.6" fill="#5a8ab8" stroke="#d8d8d8" stroke-width="1"/></svg>
<svg class="a" style="left:666px;top:105px" width="16" height="16" viewBox="0 0 16 16"><rect x="0" y="0" width="16" height="16" fill="#e8eef4"/><path d="M0.5,0 V16 M15.5,0 V16 M0,15.5 H16 M5,0 V3 M9,0 V3 M13,0 V3 M10,1.5 H15" stroke="#9ab0c8" stroke-width="0.8" stroke-dasharray="1.2,1.4"/><polygon points="3.1,3 5,3 5,5.2 8,2.6 14.8,7.6 13,7.6 13,13.9 3,13.9 3,7.5 1.6,7.5 3.1,6.2" fill="#1e2226" stroke="#fff" stroke-width="0.7"/></svg>
<svg class="a" style="left:10px;top:133px" width="16" height="16" viewBox="0 0 16 16"><defs><linearGradient id="gBx1" x1="0" y1="0" x2="1" y2="1"><stop offset="0" stop-color="#5a88c0"/><stop offset="1" stop-color="#c8dcf0"/></linearGradient><linearGradient id="gBx2" x1="0" y1="0" x2="1" y2="0"><stop offset="0" stop-color="#dce8f4"/><stop offset="1" stop-color="#6a98c8"/></linearGradient></defs><polygon points="0.5,4 9.5,4.5 9.5,15 0.5,14.5" fill="url(#gBx1)"/><polygon points="0.5,4 4.5,0.5 15.5,0.5 9.5,4.5" fill="#c8dcf0"/><polygon points="9.5,4.5 15.5,0.5 15.5,10 9.5,15" fill="url(#gBx2)"/><path d="M9.5,4.5 L9.5,15" stroke="#fff" stroke-width="1"/><path d="M1,15 L9.5,15.3 L15.5,10.5" fill="none" stroke="#404a58" stroke-width="0.8"/></svg>
<svg class="a" style="left:33px;top:133px" width="16" height="16" viewBox="0 0 16 16"><defs><linearGradient id="gWg" x1="0" y1="0" x2="1" y2="1"><stop offset="0" stop-color="#f0f6fc"/><stop offset="1" stop-color="#6a98c8"/></linearGradient></defs><polygon points="0.5,3 3,0.5 15.5,11.5 12.5,15" fill="url(#gWg)"/><polygon points="0.5,3 12.5,15 0.5,15" fill="#5a88bc"/><path d="M0.5,15.3 L12.5,15.3 L15.5,11.8" fill="none" stroke="#404a58" stroke-width="0.8"/></svg>
<svg class="a" style="left:56px;top:133px" width="16" height="16" viewBox="0 0 16 16"><defs><linearGradient id="gCn2" x1="0" y1="0" x2="1" y2="0"><stop offset="0" stop-color="#4a78b0"/><stop offset="0.55" stop-color="#f4f8fc"/><stop offset="1" stop-color="#4a74ac"/></linearGradient></defs><path d="M7.5,0.3 L0.3,12.3 Q7.5,16.2 14.7,12.3 Z" fill="url(#gCn2)"/><path d="M0.5,12.8 Q7.5,16.5 14.5,12.8" fill="none" stroke="#3a4450" stroke-width="0.9"/></svg>
<svg class="a" style="left:79px;top:133px" width="16" height="16" viewBox="0 0 16 16"><defs><radialGradient id="gSph" cx="0.38" cy="0.3" r="0.75"><stop offset="0" stop-color="#ffffff"/><stop offset="0.45" stop-color="#9cbce0"/><stop offset="1" stop-color="#4a78b0"/></radialGradient></defs><circle cx="7.9" cy="7.8" r="7.6" fill="url(#gSph)"/><path d="M14.5,11 A7.6,7.6 0 0 1 5,15" fill="none" stroke="#404a58" stroke-width="0.7"/></svg>
<svg class="a" style="left:102px;top:133px" width="16" height="16" viewBox="0 0 16 16"><defs><linearGradient id="gCy" x1="0" y1="0" x2="1" y2="0"><stop offset="0" stop-color="#5a88c0"/><stop offset="0.55" stop-color="#f4f8fc"/><stop offset="1" stop-color="#4a78b0"/></linearGradient></defs><path d="M0.5,2.5 L0.5,13.5 Q8,16.5 15.5,13.5 L15.5,2.5 Z" fill="url(#gCy)"/><ellipse cx="8" cy="2.5" rx="7.5" ry="2.2" fill="#a4c4e4"/><path d="M0.8,13.8 Q8,16.8 15.2,13.8" fill="none" stroke="#404a58" stroke-width="0.8"/></svg>
<svg class="a" style="left:125px;top:133px" width="16" height="16" viewBox="0 0 16 16"><defs><radialGradient id="gTr2" cx="0.35" cy="0.3" r="0.75"><stop offset="0" stop-color="#e8f2fa"/><stop offset="0.5" stop-color="#6a98cc"/><stop offset="1" stop-color="#3a68a4"/></radialGradient></defs><ellipse cx="7.6" cy="7.4" rx="7.3" ry="6.6" fill="url(#gTr2)"/><path d="M14,10.5 A7.3,6.6 0 0 1 4,13.5" fill="none" stroke="#404a58" stroke-width="0.8"/><ellipse cx="8.2" cy="7.6" rx="2.8" ry="1.9" fill="#f0f0f0" stroke="#28406a" stroke-width="1"/></svg>
<svg class="a" style="left:148px;top:133px" width="16" height="16" viewBox="0 0 16 16"><polygon points="7.5,0.5 0.5,11.5 7.5,14.8" fill="#5a8ac4"/><polygon points="7.5,0.5 7.5,14.8 14,11.5" fill="#8ab0dc"/><line x1="7.5" y1="1" x2="7.5" y2="14.5" stroke="#f4f8fc" stroke-width="1.2"/></svg>
<svg class="a" style="left:171px;top:133px" width="16" height="16" viewBox="0 0 16 16"><path d="M0.5,9.5 L3,8.5 L4.5,11 L7,7 L8.5,9.5 L11,5 L12.5,7.5 L15.5,3" fill="none" stroke="#2e62a8" stroke-width="1.9" stroke-linejoin="round"/><path d="M1,9 L3,8.5 M7,7 L8,8" stroke="#90b8e8" stroke-width="0.8"/></svg>
<svg class="a" style="left:194px;top:133px" width="16" height="16" viewBox="0 0 16 16"><defs><linearGradient id="gPl" x1="0" y1="0" x2="1" y2="1"><stop offset="0" stop-color="#4a80c8"/><stop offset="1" stop-color="#d8e8f8"/></linearGradient></defs><polygon points="0.5,10 9,1.5 15,3 7,12" fill="url(#gPl)"/><path d="M3,8 L11,2.5 M5,10 L13,4 M6,3.5 L9,11 M9,2 L11,9" stroke="#c8dcf4" stroke-width="0.6"/><path d="M0.5,10.3 L7,12.5 L15,3.3" fill="none" stroke="#707a88" stroke-width="0.8"/></svg>
<svg class="a" style="left:223px;top:133px" width="16" height="16" viewBox="0 0 16 16"><polygon points="1.5,5.5 4,3 11,3 11,12 8.5,14.5 1.5,14.5" fill="#ddeaf6" stroke="#000" stroke-width="1.3"/><polygon points="4,3 11,3 8.5,5.5 1.5,5.5" fill="#7ab0e0"/><path d="M1.5,5.5 H8.5 V14.5 M8.5,5.5 L11,3" fill="none" stroke="#000" stroke-width="1.1"/><line x1="13.5" y1="3" x2="13.5" y2="13.5" stroke="#1e3a78" stroke-width="1.6"/><polygon points="13.5,0 11.8,3.5 15.2,3.5" fill="#1e3a78"/></svg>
<svg class="a" style="left:247px;top:133px" width="16" height="16" viewBox="0 0 16 16"><defs><linearGradient id="gPp" x1="0" y1="0" x2="1" y2="1"><stop offset="0" stop-color="#f0f6fc"/><stop offset="1" stop-color="#6a98c8"/></linearGradient></defs><polygon points="3,6 8,3.5 13,6 13,12.5 8,15 3,12.5" fill="url(#gPp)"/><path d="M3,6 L8,8.5 L13,6 M8,8.5 V15 M3,6 L8,3.5 L13,6 V12.5 L8,15 L3,12.5 Z" fill="none" stroke="#111" stroke-width="0.9" stroke-dasharray="0.9,1.1"/><line x1="8" y1="1.5" x2="8" y2="6" stroke="#1e3a78" stroke-width="1.5"/><polygon points="8,0 5.8,2.8 10.2,2.8" fill="#1e3a78"/><path d="M0.5,10.5 L8,15.5 L15.5,10.5" fill="none" stroke="#111" stroke-width="1.2"/></svg>
<svg class="a" style="left:269px;top:133px" width="16" height="16" viewBox="0 0 16 16"><path d="M1,4 C6,1 11,3 13.5,13" fill="none" stroke="#8ab0d8" stroke-width="4.2"/><path d="M1,3 C6,0.5 10.5,2.5 12.5,8" fill="none" stroke="#e8f0fa" stroke-width="1.3"/><ellipse cx="12.5" cy="13" rx="2.8" ry="1.3" fill="#f0f0f0" stroke="#6a90c0" stroke-width="0.8"/></svg>
<svg class="a" style="left:293px;top:133px" width="16" height="16" viewBox="0 0 16 16"><defs><linearGradient id="gRv" x1="0" y1="0" x2="1" y2="0"><stop offset="0" stop-color="#3a70b8"/><stop offset="0.5" stop-color="#b8d4f0"/><stop offset="1" stop-color="#3a70b8"/></linearGradient></defs><path d="M3.5,3.5 C6,1 10,1 12.5,3.5" fill="none" stroke="#1e4a88" stroke-width="1.4"/><polygon points="0.8,3.5 4.5,1.8 4,5.5" fill="#1e4a88"/><path d="M0.5,8 L0.5,13.5 Q7,16.5 13.5,13.5 L13.5,8 Z" fill="url(#gRv)"/><ellipse cx="7" cy="8" rx="6.5" ry="2.5" fill="#a8c8ec"/><rect x="4.5" y="10" width="6" height="4.5" fill="#142e5a"/></svg>
<svg class="a" style="left:315px;top:133px" width="16" height="16" viewBox="0 0 16 16"><defs><linearGradient id="gLf2" x1="0" y1="0" x2="1" y2="0"><stop offset="0" stop-color="#8ab0dc"/><stop offset="0.45" stop-color="#e8f0fa"/><stop offset="1" stop-color="#7aa2d2"/></linearGradient></defs><path d="M1.5,2 Q4.5,5 4,8.5 Q3,11 0.5,12.5 L12.5,12.5 Q10,11 9.5,8.5 Q9,5 11.5,2 Z" fill="url(#gLf2)"/><ellipse cx="6.5" cy="2" rx="5" ry="1.8" fill="#b0ccec"/><ellipse cx="6.5" cy="12.5" rx="6.2" ry="2.2" fill="#90b4de"/><path d="M0.5,13 Q6.5,16 12.5,13" fill="none" stroke="#505a68" stroke-width="0.9"/></svg>
<svg class="a" style="left:344px;top:133px" width="16" height="16" viewBox="0 0 16 16"><g transform="translate(0,3)"><defs><clipPath id="cLu"><circle cx="5.6" cy="5.5" r="5.1"/></clipPath></defs><g fill="#94bcc8"><circle cx="5.6" cy="5.5" r="5.1"/><circle cx="10.4" cy="5.5" r="5.1"/></g><g fill="none" stroke="#1e4a78" stroke-width="1.1"><circle cx="5.6" cy="5.5" r="5.1"/><circle cx="10.4" cy="5.5" r="5.1"/></g></g></svg>
<svg class="a" style="left:367px;top:133px" width="16" height="16" viewBox="0 0 16 16"><g transform="translate(0,3)"><defs><clipPath id="cLs"><circle cx="5.6" cy="5.5" r="5.1"/></clipPath></defs><g fill="#94bcc8"><circle cx="5.6" cy="5.5" r="5.1"/></g><circle cx="10.4" cy="5.5" r="5.1" fill="#f0f0f0"/><g fill="none" stroke="#1e4a78" stroke-width="1.1"><circle cx="5.6" cy="5.5" r="5.1"/><circle cx="10.4" cy="5.5" r="5.1"/></g></g></svg>
<svg class="a" style="left:390px;top:133px" width="16" height="16" viewBox="0 0 16 16"><g transform="translate(0,3)"><defs><clipPath id="cLi"><circle cx="5.6" cy="5.5" r="5.1"/></clipPath></defs><g clip-path="url(#cLi)"><circle cx="10.4" cy="5.5" r="5.1" fill="#94bcc8"/></g><g fill="none" stroke="#1e4a78" stroke-width="1.1"><circle cx="5.6" cy="5.5" r="5.1"/><circle cx="10.4" cy="5.5" r="5.1"/></g></g></svg>
<svg class="a" style="left:418px;top:133px" width="16" height="16" viewBox="0 0 16 16"><path d="M7.5,1 L14.5,5 L14.5,11 L7.5,15 L0.5,11 L0.5,5 Z" fill="none" stroke="#404040" stroke-width="0.8"/><path d="M7.5,2 V7.5 M7.5,7.5 L1.5,10.5 M7.5,7.5 L13.5,10.5" stroke="#fff" stroke-width="2.5"/><path d="M7.5,2 V7.5" stroke="#1e4ab0" stroke-width="1.2"/><path d="M7.5,7.5 L1.5,10.5" stroke="#20a020" stroke-width="1.2"/><path d="M7.5,7.5 L13.5,10.5" stroke="#d02020" stroke-width="1.2"/><rect x="6" y="0.3" width="3" height="2.6" fill="#1e2e8a"/><rect x="6.3" y="6.3" width="2.4" height="2.4" fill="#606060"/><rect x="0" y="9.2" width="3" height="2.6" fill="#000"/><rect x="1" y="10" width="1" height="1" fill="#20e020"/><rect x="12" y="9.2" width="3" height="2.6" fill="#b01818"/></svg>
<svg class="a" style="left:442px;top:133px" width="16" height="16" viewBox="0 0 16 16"><ellipse cx="8" cy="8" rx="7.3" ry="7.5" fill="none" stroke="#1e8a2a" stroke-width="1.1"/><ellipse cx="7.8" cy="8" rx="2.8" ry="7.5" fill="none" stroke="#e02020" stroke-width="1.1"/><ellipse cx="8" cy="8" rx="7.3" ry="3" fill="none" stroke="#1e50c0" stroke-width="1.3"/><rect x="7" y="7" width="2" height="2" fill="#000"/></svg>
<svg class="a" style="left:465px;top:133px" width="16" height="16" viewBox="0 0 16 16"><defs><linearGradient id="gAl" x1="0" y1="0" x2="1" y2="0"><stop offset="0" stop-color="#a0a0a0"/><stop offset="1" stop-color="#e0e0e0"/></linearGradient></defs><polygon points="0.5,5 7,0.3 7,11.5 0.5,16" fill="url(#gAl)" stroke="#b8b8b8" stroke-width="0.5"/><ellipse cx="4.3" cy="7.6" rx="1.5" ry="3" fill="none" stroke="#000" stroke-width="1.3"/><path d="M9,3.2 L11.5,5.5 M9,3.2 L9,5.2 M9,3.2 L11,3.2 M12,3.5 V6.5" stroke="#000" stroke-width="1"/><circle cx="11.5" cy="13.2" r="2" fill="none" stroke="#000" stroke-width="1.4"/></svg>
<svg class="a" style="left:0;top:0" width="864" height="430" viewBox="0 0 864 430">
<rect x="0" y="156" width="864" height="274" fill="#000"/>
<clipPath id="clp"><rect x="0" y="156" width="864" height="274"/></clipPath>
<g clip-path="url(#clp)" fill="none" stroke="#fff" stroke-width="1" shape-rendering="crispEdges">
<polyline points="787.2,195.3 781.9,235.9 766.2,273.8 741.2,306.2 708.8,331.2 670.9,346.9 630.3,352.2 589.7,346.9 551.9,331.2 519.4,306.2 494.4,273.8 478.7,235.9 473.4,195.3 478.7,154.7 494.4,116.8 519.4,84.4 551.8,59.4 589.7,43.7 630.3,38.4 670.9,43.7 708.8,59.4 741.2,84.4 766.2,116.8 781.9,154.7 787.2,195.3"/>
<polyline points="532,318.5 451.5,320.5 491.8,268.5"/>
<line x1="532" y1="341.5" x2="574" y2="341.5"/>
<line x1="576" y1="341.5" x2="600" y2="341.5"/>
<line x1="566.5" y1="308" x2="566.5" y2="376"/>
<circle cx="567" cy="340" r="5.5" stroke="#f0a050"/>
<line x1="561" y1="333.5" x2="574" y2="333.5" stroke="#f0a050" stroke-width="1.2"/>
<rect x="664" y="360" width="1" height="2" fill="#333" stroke="none"/>
</g>
<rect x="582.5" y="358.5" width="62" height="21" fill="#1a1758" stroke="#d4d0f4"/>
</svg>
<span class="a" style="left:586px;top:362px;font-size:12px;line-height:14px;color:#fff;white-space:nowrap">递延切点</span></body></html>
